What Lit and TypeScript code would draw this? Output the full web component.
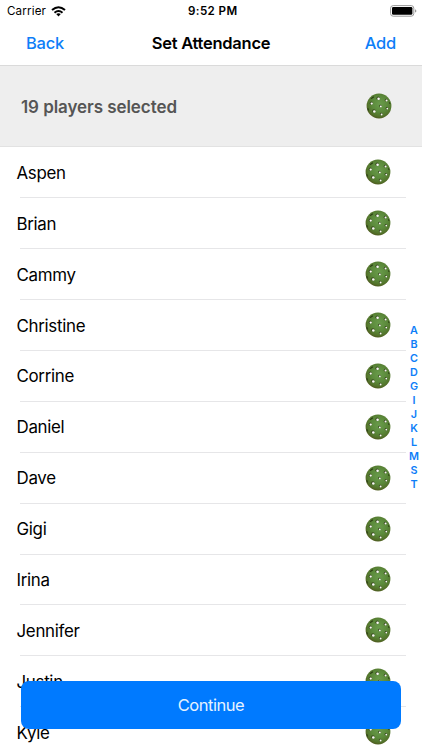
import { LitElement, html, svg, css } from "lit";
import { customElement, property } from "lit/decorators.js";

const HOLES: [number, number, number][] = [
  [12.2, 5.3, 1.8], [20.2, 7.2, 1.4], [5.3, 10.2, 1.6], [14.4, 13, 1.3],
  [20.9, 15.2, 1.2], [7.9, 18.1, 1.8], [15.2, 21.1, 1.3],
];

@customElement("pickle-ball")
class PickleBall extends LitElement {
  static styles = css`
    :host { display: block; width: 26px; height: 26px; flex: none; }
    .ball { display: block; }
  `;
  render() {
    return html`<svg class="ball" width="26" height="26" viewBox="0 0 26 26">
      <defs>
        <radialGradient id="g" cx="54%" cy="42%" r="58%">
          <stop offset="0" stop-color="#6a9c4c" />
          <stop offset="0.55" stop-color="#5b8a3b" />
          <stop offset="0.85" stop-color="#53742b" />
          <stop offset="1" stop-color="#4f5d20" />
        </radialGradient>
      </defs>
      <circle cx="13" cy="13" r="12.4" fill="url(#g)" />
      <path d="M4.6 5.4l2.8-2.2.8 1-2.6 1.9zM1.2 15.6l1.1-.5.7 2.2-.9.5zM22.9 9.4l1-.2.5 1.7-.8.2z" fill="#293d14" />
      ${HOLES.map(([x, y, r]) => svg`
        <circle cx=${x} cy=${y} r=${r} fill="#3a4c20" />
        <circle cx=${x + 0.4} cy=${y + 0.4} r=${r * 0.72} fill="#fafbf6" />`)}
    </svg>`;
  }
}

@customElement("player-row")
class PlayerRow extends LitElement {
  @property() name = "";
  static styles = css`
    :host { display: block; height: 50.9px; }
    .row {
      height: 100%; box-sizing: border-box; margin: 0 16px 0 20px;
      border-bottom: 1px solid #e6e6e8;
      display: flex; align-items: center; justify-content: space-between;
      padding: 0 15.5px 0 0;
    }
    .name {
      margin-left: -3.5px; padding-top: 1px; font-size: 16.9px;
      letter-spacing: -0.3px; line-height: 22px;
    }
  `;
  render() {
    return html`<div class="row"><span class="name">${this.name}</span><pickle-ball></pickle-ball></div>`;
  }
}

@customElement("app-root")
class AppRoot extends LitElement {
  static styles = css`
    :host {
      display: block; position: relative; width: 422px; height: 750px;
      overflow: hidden; background: #fff; color: #000;
      font-family: Inter, "Liberation Sans", sans-serif;
    }
    .status, .nav {
      display: grid; grid-template-columns: 1fr auto 1fr; align-items: center;
    }
    .status { height: 22px; padding: 0 5px 0 7px; font-size: 11.6px; }
    .carrier { display: flex; align-items: center; gap: 5px; letter-spacing: 0.15px; }
    .time { font-weight: 600; letter-spacing: 0.4px; padding-left: 1.5px; }
    .battery { justify-self: end; }
    .nav {
      height: 43px; box-sizing: border-box; padding: 0 26px 2px; font-size: 16.5px;
      letter-spacing: -0.25px;
    }
    .link { color: #0d7ef8; font-weight: 500; }
    .add { justify-self: end; }
    .title { font-weight: 600; }
    .summary {
      height: 82.4px; box-sizing: border-box; background: #eee;
      border-top: 1px solid #dadada; border-bottom: 1px solid #e2e2e2;
      display: flex; align-items: center; justify-content: space-between;
      padding: 0 30.5px 0 21px; color: #555; font-size: 17px; font-weight: 600;
      letter-spacing: -0.07px;
    }
    .count { padding-top: 1.5px; }
    .index {
      position: absolute; left: 406px; top: 323.6px; width: 16px;
      display: flex; flex-direction: column; align-items: center;
      color: #0d7ef8; font-size: 10.8px; font-weight: 600; line-height: 14.05px;
    }
    .continue {
      position: absolute; left: 20.6px; top: 680.6px; width: 380.8px; height: 48.6px;
      border: 0; border-radius: 8px; background: #007aff; color: #e5f2ff;
      font-family: inherit; font-size: 16.5px; letter-spacing: -0.45px; padding: 0;
    }
  `;
  render() {
    const players = ["Aspen", "Brian", "Cammy", "Christine", "Corrine", "Daniel",
      "Dave", "Gigi", "Irina", "Jennifer", "Justin", "Kyle"];
    return html`
      <div class="status">
        <span class="carrier"><span>Carrier</span>
          <svg width="15" height="11" viewBox="0 0 15 11">
            <g fill="none" stroke="#000" stroke-width="2">
              <path d="M1 4.1Q7.5-1.6 14 4.1" /><path d="M3.5 6.7Q7.5 3.3 11.5 6.7" />
            </g>
            <path d="M5.2 8.1Q7.5 6.3 9.8 8.1L7.5 10.5z" />
          </svg>
        </span>
        <span class="time">9:52 PM</span>
        <svg class="battery" width="27" height="12" viewBox="0 0 27 12">
          <rect x="0.6" y="0.6" width="23.2" height="10.6" rx="2.6" fill="#fff" stroke="#999" />
          <rect x="2" y="2" width="20.4" height="7.8" rx="1.3" />
          <path d="M25 4.2q1.4.5 1.4 1.7T25 7.6z" fill="#999" />
        </svg>
      </div>
      <div class="nav">
        <span class="link">Back</span><span class="title">Set Attendance</span><span class="link add">Add</span>
      </div>
      <div class="summary"><span class="count">19 players selected</span><pickle-ball></pickle-ball></div>
      <div>${players.map((p) => html`<player-row .name=${p}></player-row>`)}</div>
      <div class="index">${[..."ABCDGIJKLMST"].map((c) => html`<span>${c}</span>`)}</div>
      <button class="continue">Continue</button>
    `;
  }
}
